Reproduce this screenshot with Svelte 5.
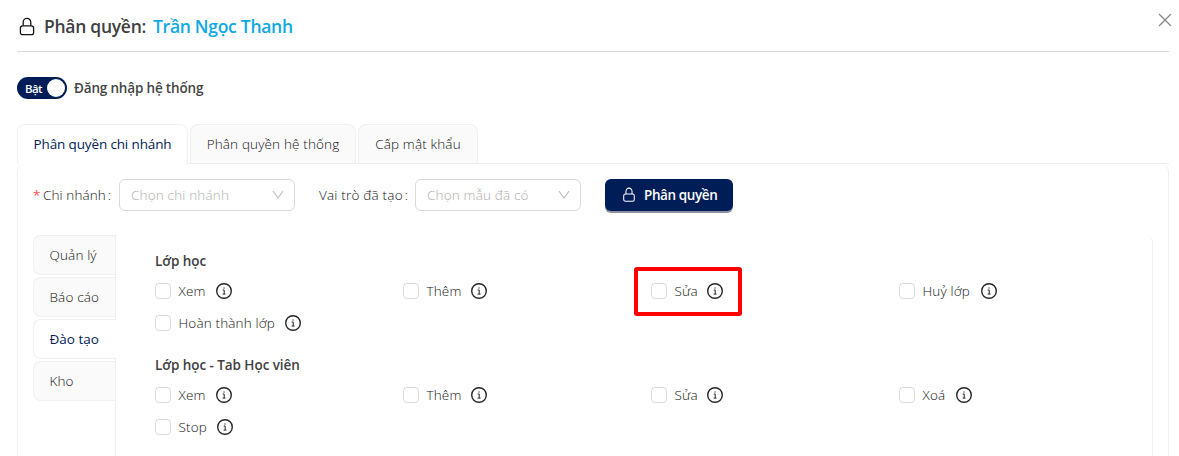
<script>
  const tabs = [
    { name: 'Phân quyền chi nhánh', width: 171 },
    { name: 'Phân quyền hệ thống', width: 166 },
    { name: 'Cấp mật khẩu', width: 120 }
  ];
  const sections = ['Quản lý', 'Báo cáo', 'Đào tạo', 'Kho'];
  const groups = [
    {
      title: 'Lớp học',
      items: [
        { name: 'Xem', width: 28 },
        { name: 'Thêm', width: 35 },
        { name: 'Sửa', width: 23, marked: true },
        { name: 'Huỷ lớp', width: 49 },
        { name: 'Hoàn thành lớp', width: 97 }
      ]
    },
    {
      title: 'Lớp học - Tab Học viên',
      items: [
        { name: 'Xem', width: 28 },
        { name: 'Thêm', width: 35 },
        { name: 'Sửa', width: 23 },
        { name: 'Xoá', width: 24 },
        { name: 'Stop', width: 29 }
      ]
    }
  ];
</script>

{#snippet lock(size)}
  <svg width={size} height={size} viewBox="0 0 20 20" fill="none" stroke="currentColor" stroke-width="1.3">
    <rect x="3.4" y="8.8" width="13.2" height="8.9" rx="2.2" />
    <path d="M6.2 8.8V5.2a3.8 3.8 0 0 1 7.6 0v3.6" />
  </svg>
{/snippet}

{#snippet chevron()}
  <svg width="12" height="10" viewBox="0 0 12 10" fill="none" stroke="#bfbfbf" stroke-width="1.2"><path d="M1 1l5 7 5-7" /></svg>
{/snippet}

<div class="page">
  <header>
    <span class="title-lock">{@render lock(20)}</span>
    <h1>Phân quyền:</h1>
    <strong>Trần Ngọc Thanh</strong>
    <button class="close" aria-label="Đóng">
      <svg width="14" height="14" viewBox="0 0 14 14" stroke="#85858a" stroke-width="1.3"><path d="M1 1l12 12M13 1L1 13" /></svg>
    </button>
  </header>

  <div class="login">
    <span class="switch"><b>Bật</b><i></i></span>
    <span class="login-text">Đăng nhập hệ thống</span>
  </div>

  <nav>
    {#each tabs as tab, i}
      <div class="tab" class:active={i === 0} style:width="{tab.width}px"><span>{tab.name}</span></div>
    {/each}
  </nav>

  <main>
    <div class="form">
      <span class="star">*</span>
      <label class="branch" for="branch">Chi nhánh<span class="colon">:</span></label>
      <div class="select first" id="branch"><span>Chọn chi nhánh</span>{@render chevron()}</div>
      <label class="role" for="role">Vai trò đã tạo<span class="colon">:</span></label>
      <div class="select second" id="role"><span>Chọn mẫu đã có</span>{@render chevron()}</div>
      <button class="primary">{@render lock(16)}<span>Phân quyền</span></button>
    </div>

    <div class="body">
      <aside>
        {#each sections as section, i}
          <div class="side" class:active={i === 2}>{section}</div>
        {/each}
      </aside>
      <section>
        {#each groups as group}
          <div class="group">
            <h2>{group.title}</h2>
            <div class="grid">
              {#each group.items as item}
                <div class="item" class:marked={item.marked}>
                  <span class="box"></span>
                  <span class="name" style:width="{item.width}px">{item.name}</span>
                  <svg width="16" height="16" viewBox="0 0 16 16" fill="none" stroke="#262626">
                    <circle cx="8" cy="8" r="7.3" stroke-width="1.4" />
                    <path d="M6.7 7h1.5v4M6.6 11.1h2.9" stroke-width="1" />
                    <path d="M7.4 5h1.3" stroke-width="1.2" />
                  </svg>
                </div>
              {/each}
            </div>
          </div>
        {/each}
      </section>
    </div>
  </main>
</div>

<style>
  :global(body) { background: #fff; overflow: hidden; }
  .page {
    box-sizing: border-box;
    width: 1179px;
    height: 456px;
    padding: 0 10px 0 17px;
    overflow: hidden;
    display: flex;
    flex-direction: column;
    font-family: "Open Sans", "Noto Sans", sans-serif;
    font-size: 13.5px;
    font-weight: 300;
    color: #141414;
    white-space: nowrap;
  }
  .page *, .marked::after { box-sizing: border-box; }
  svg { display: block; flex: none; }
  button { font: inherit; border: 0; padding: 0; }
  header {
    height: 52px;
    flex: none;
    border-bottom: 1px solid #d9d9d9;
    display: flex;
    align-items: center;
    padding-top: 2px;
  }
  .title-lock { width: 27px; }
  h1, strong { margin: -2px 0 0; font-size: 17.5px; font-weight: 600; line-height: 24px; letter-spacing: -.28px; }
  h1 { width: 109px; color: #404040; }
  strong { color: #0da9e1; }
  .close { margin: 0 -3px 13px auto; background: none; }
  .login { height: 22px; margin-top: 25px; flex: none; display: flex; align-items: center; }
  .switch {
    width: 50px;
    height: 22px;
    border-radius: 11px;
    background: #001d58;
    display: flex;
    align-items: center;
    justify-content: space-between;
    padding: 0 2px 0 8px;
  }
  .switch b { color: #fff; font-size: 11.5px; font-weight: 600; letter-spacing: -.6px; }
  .switch i { width: 18px; height: 18px; border-radius: 50%; background: #fff; }
  .login-text { margin-left: 7px; font-weight: 600; font-size: 13.5px; letter-spacing: -.17px; color: #444; }
  nav { height: 40px; margin-top: 25px; flex: none; display: flex; gap: 2px; border-bottom: 1px solid #eee; }
  .tab {
    height: 39px;
    border: 1px solid #f0f0f0;
    border-bottom: 0;
    border-radius: 8px 8px 0 0;
    background: #fafafa;
    display: flex;
    align-items: center;
    justify-content: center;
    letter-spacing: .15px;
  }
  .tab.active { height: 40px; padding-bottom: 1px; background: #fff; color: #001d58; font-weight: 400; letter-spacing: -.14px; }
  main {
    width: 1152px;
    height: 310px;
    border: 1px solid #f0f0f0;
    border-width: 0 1px;
    border-radius: 8px 8px 0 0;
    padding: 15px 15px 0;
  }
  .form { height: 32px; display: flex; align-items: center; }
  .star { width: 10px; color: #ff4d4f; font-weight: 400; }
  .branch { width: 76px; letter-spacing: .1px; }
  .colon { margin-left: 2px; }
  .select {
    height: 32px;
    border: 1px solid #d9d9d9;
    border-radius: 6px;
    display: flex;
    align-items: center;
    justify-content: space-between;
    padding: 0 10px 0 11px;
    color: #adadad;
    letter-spacing: .17px;
  }
  .first { width: 176px; }
  .second { width: 166px; }
  .role { width: 96px; margin-left: 24px; letter-spacing: .2px; }
  .primary {
    width: 128px;
    height: 32px;
    margin-left: 24px;
    border-radius: 6px;
    background: #001d58;
    box-shadow: 0 2px 0 #8c909d;
    color: #fff;
    display: flex;
    align-items: center;
    padding-left: 16px;
    gap: 7px;
    font-weight: 600;
    letter-spacing: -.4px;
  }
  .body { display: flex; margin-top: 24px; height: 239px; }
  aside { width: 83px; flex: none; display: flex; flex-direction: column; gap: 2px; border-right: 1px solid #eee; }
  .side {
    height: 40px;
    border: 1px solid #f0f0f0;
    border-right: 0;
    border-radius: 8px 0 0 8px;
    background: #fafafa;
    padding-left: 15.5px;
    line-height: 38px;
    letter-spacing: .15px;
  }
  .side.active { margin-right: -1px; background: #fff; color: #001d58; font-weight: 400; letter-spacing: 0; }
  section { flex: 1; border-right: 1px solid #f0f0f0; border-radius: 0 8px 0 0; padding: 16px 0 0 39px; }
  .group { height: 104px; }
  h2 { margin: 0; height: 24px; line-height: 21px; font-size: 13.5px; font-weight: 600; letter-spacing: -.06px; color: #404040; }
  .grid { display: grid; grid-template-columns: repeat(4, 248px); grid-auto-rows: 32px; }
  .item { position: relative; display: flex; align-items: center; height: 32px; letter-spacing: .15px; }
  .box { width: 16px; height: 16px; border: 1px solid #d9d9d9; border-radius: 4px; margin-right: 7.5px; }
  .name { margin-right: 9.5px; }
  .marked::after {
    content: "";
    position: absolute;
    left: -17px;
    top: -8px;
    width: 108px;
    height: 49px;
    border: 4px solid #fe0000;
    border-radius: 3px;
  }
</style>
